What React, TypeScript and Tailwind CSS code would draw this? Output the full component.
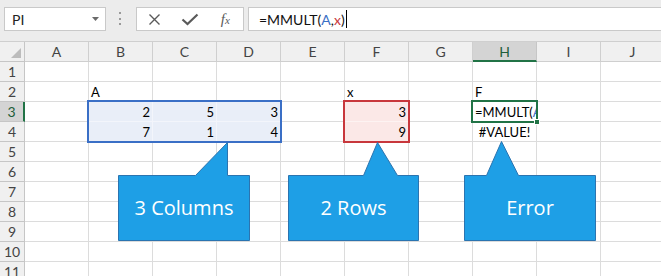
import React from 'react';

const COLS = ['A', 'B', 'C', 'D', 'E', 'F', 'G', 'H', 'I', 'J'];
const ROWS = [1, 2, 3, 4, 5, 6, 7, 8, 9, 10, 11];

type C = { t: React.ReactNode; a: 'l' | 'r' | 'c' };

const content: Record<string, C> = {
  '2-1': { t: 'A', a: 'l' },
  '2-5': { t: 'x', a: 'l' },
  '2-7': { t: 'F', a: 'l' },
  '3-1': { t: '2', a: 'r' },
  '3-2': { t: '5', a: 'r' },
  '3-3': { t: '3', a: 'r' },
  '3-5': { t: '3', a: 'r' },
  '3-7': {
    t: (
      <>
        =MMULT(<span className="text-[#3a6fc6]">A</span>,<span className="text-[#c8373c]">x</span>)
      </>
    ),
    a: 'l',
  },
  '4-1': { t: '7', a: 'r' },
  '4-2': { t: '1', a: 'r' },
  '4-3': { t: '4', a: 'r' },
  '4-5': { t: '9', a: 'r' },
  '4-7': { t: '#VALUE!', a: 'c' },
};

function cellBg(r: number, c: number) {
  if ((r === 3 || r === 4) && c >= 1 && c <= 3) return 'bg-[#e9eef8] border-[#f3f5fb]';
  if ((r === 3 || r === 4) && c === 5) return 'bg-[#fbe8e7] border-[#fdf3f2]';
  return 'bg-white border-[#dcdcdc]';
}

function alignCls(a: 'l' | 'r' | 'c') {
  if (a === 'r') return 'text-right pr-[2px]';
  if (a === 'c') return 'text-center';
  return 'text-left pl-[2px]';
}

type CalloutProps = {
  x: number;
  y: number;
  w: number;
  h: number;
  boxTop: number;
  points: string;
  label: string;
};

function Callout({ x, y, w, h, boxTop, points, label }: CalloutProps) {
  return (
    <div className="absolute" style={{ left: x, top: y, width: w + 1, height: h + 1 }}>
      <svg width={w + 1} height={h + 1} className="absolute left-0 top-0">
        <polygon points={points} fill="#1e9fe6" stroke="#2b74b0" strokeWidth="1" />
      </svg>
      <div
        className="absolute left-0 flex items-center justify-center font-['Open_Sans',sans-serif] text-[20px] text-white"
        style={{ top: boxTop, width: w + 1, height: h - boxTop + 1 }}
      >
        {label}
      </div>
    </div>
  );
}

function shift(pts: number[][]) {
  return pts.map(([a, b]) => `${a + 0.5},${b + 0.5}`).join(' ');
}

export default function App() {
  return (
    <div className="relative h-[276px] w-[661px] overflow-hidden bg-white font-['Lato',sans-serif] text-[13px] text-black">
      {/* toolbar */}
      <div className="flex h-[42px] border-b border-[#cfcfcf] bg-[#ececec]">
        <div className="ml-[4px] mt-[7px] flex h-[24px] w-[102px] items-center justify-between border border-[#c9c9c9] bg-white pl-[7px] pr-[6px]">
          <span className="text-[14px] text-[#222]">PI</span>
          <svg width="7" height="4" viewBox="0 0 7 4">
            <path d="M0 0H7L3.5 4Z" fill="#6a6a6a" />
          </svg>
        </div>
        <div className="ml-[13px] mt-[12px] flex h-[13px] w-[2px] flex-col justify-between">
          <div className="h-[2px] w-[2px] bg-[#9a9a9a]" />
          <div className="h-[2px] w-[2px] bg-[#9a9a9a]" />
          <div className="h-[2px] w-[2px] bg-[#9a9a9a]" />
        </div>
        <div className="ml-[15px] mt-[7px] flex h-[24px] w-[108px] items-center border border-[#c9c9c9] bg-white">
          <div className="flex w-[36px] justify-center">
            <svg width="13" height="13" viewBox="0 0 13 13">
              <path d="M1.5 1.5L11.5 11.5M11.5 1.5L1.5 11.5" stroke="#5a5a5a" strokeWidth="1.4" />
            </svg>
          </div>
          <div className="flex w-[36px] justify-center">
            <svg width="18" height="13" viewBox="0 0 18 13">
              <path d="M1.5 6.5L6.5 11L16.5 1.5" stroke="#5a5a5a" strokeWidth="2.2" fill="none" />
            </svg>
          </div>
          <div className="flex w-[36px] justify-center">
            <span className="font-['Liberation_Serif',serif] text-[15px] italic leading-none text-[#5a5a5a]">
              f<span className="text-[11px]">x</span>
            </span>
          </div>
        </div>
        <div className="ml-[4px] mt-[7px] flex h-[24px] flex-1 items-center border-y border-l border-[#c9c9c9] bg-white pl-[10px] text-[14px] text-[#111]">
          <span className="whitespace-nowrap">
            =MMULT(<span className="text-[#3a6fc6]">A</span>,<span className="text-[#c8373c]">x</span>)
          </span>
          <div className="ml-[1px] h-[18px] w-[1px] bg-black" />
        </div>
      </div>

      {/* grid */}
      <div className="grid w-[665px] grid-cols-[25px_repeat(10,64px)] auto-rows-[20px] leading-[20px]">
        <div className="relative border-b border-r border-[#c6c6c6] bg-[#f0f0f0]">
          <svg width="10" height="10" viewBox="0 0 10 10" className="absolute bottom-[3px] right-[3px]">
            <path d="M10 0V10H0Z" fill="#bcbcbc" />
          </svg>
        </div>
        {COLS.map((c) =>
          c === 'H' ? (
            <div
              key={c}
              className="border-b-2 border-r border-b-[#217346] border-r-[#c6c6c6] bg-[#d4d4d4] text-center text-[14px] leading-[19px] text-[#1e5e3a]"
            >
              {c}
            </div>
          ) : (
            <div
              key={c}
              className="border-b border-r border-[#cfcfcf] bg-[#f0f0f0] text-center text-[14px] leading-[19px] text-[#444]"
            >
              {c}
            </div>
          )
        )}
        {ROWS.map((r) => (
          <React.Fragment key={r}>
            {r === 3 ? (
              <div className="border-b border-r-2 border-b-[#c6c6c6] border-r-[#217346] bg-[#d4d4d4] text-center text-[14px] text-[#1e5e3a]">
                {r}
              </div>
            ) : (
              <div className="border-b border-r border-[#c6c6c6] bg-[#f0f0f0] text-center text-[14px] text-[#444]">
                {r}
              </div>
            )}
            {COLS.map((_, ci) => {
              const cc = content[`${r}-${ci}`];
              return (
                <div
                  key={ci}
                  className={`overflow-hidden whitespace-nowrap border-b border-r ${cellBg(r, ci)} ${
                    cc ? alignCls(cc.a) : ''
                  }`}
                >
                  {cc ? cc.t : null}
                </div>
              );
            })}
          </React.Fragment>
        ))}
      </div>

      {/* range highlights */}
      <div className="absolute left-[87px] top-[100px] h-[43px] w-[195px] border-2 border-[#3a6fc6]" />
      <div className="absolute left-[343px] top-[100px] h-[43px] w-[67px] border-2 border-[#c8373c]" />
      <div className="absolute left-[471px] top-[100px] h-[23px] w-[67px] border-2 border-[#217346]" />
      <div className="absolute left-[534px] top-[119px] h-[6px] w-[6px] border border-white bg-[#217346]" />

      {/* callouts */}
      <Callout
        x={118}
        y={142}
        w={131}
        h={98}
        boxTop={33}
        points={shift([[0, 33], [77, 33], [109, 0], [109, 33], [131, 33], [131, 98], [0, 98]])}
        label="3 Columns"
      />
      <Callout
        x={288}
        y={142}
        w={130}
        h={98}
        boxTop={33}
        points={shift([[0, 33], [75, 33], [89, 0], [109, 33], [130, 33], [130, 98], [0, 98]])}
        label="2 Rows"
      />
      <Callout
        x={464}
        y={141}
        w={131}
        h={99}
        boxTop={34}
        points={shift([[0, 34], [22, 34], [37, 0], [54, 34], [131, 34], [131, 99], [0, 99]])}
        label="Error"
      />
    </div>
  );
}
